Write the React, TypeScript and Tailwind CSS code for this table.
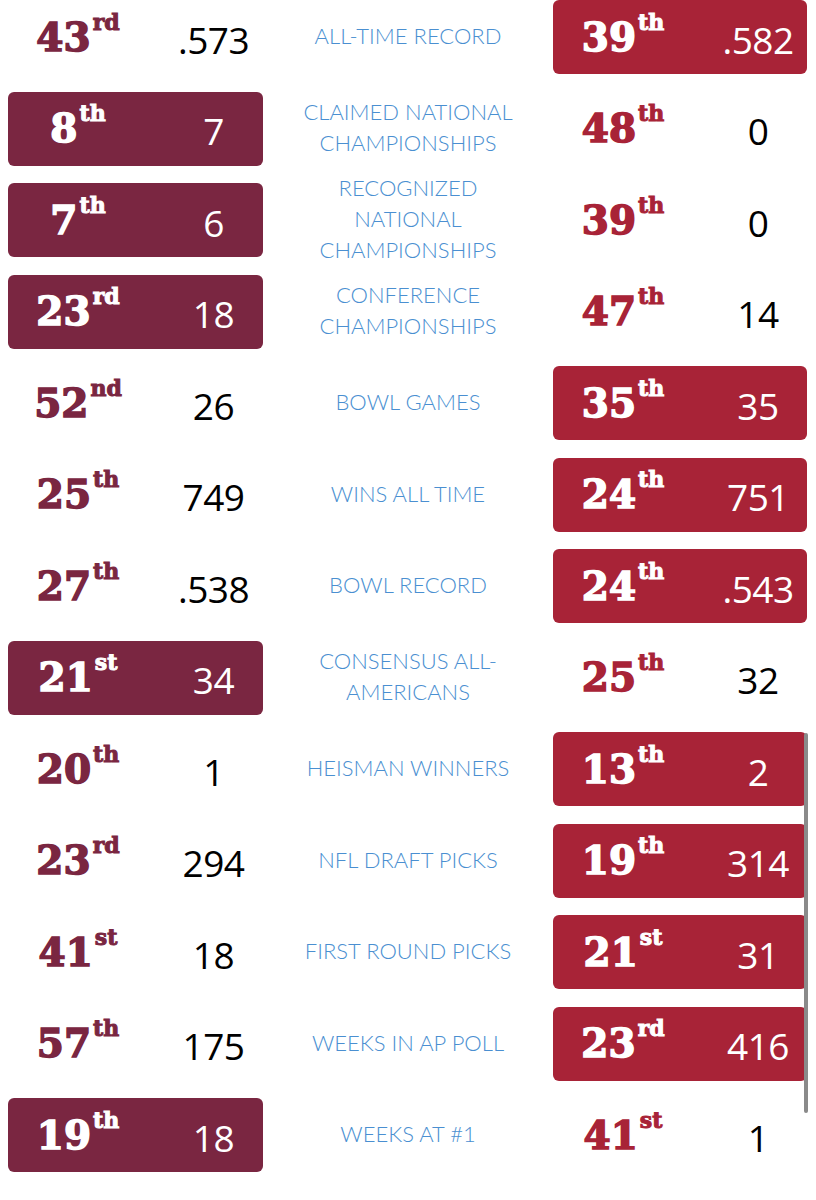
const rows: {
  l: [string, string, string];
  lBox: boolean;
  label: string[];
  r: [string, string, string];
  rBox: boolean;
}[] = [
  { l: ["43", "rd", ".573"], lBox: false, label: ["ALL-TIME RECORD"], r: ["39", "th", ".582"], rBox: true },
  { l: ["8", "th", "7"], lBox: true, label: ["CLAIMED NATIONAL", "CHAMPIONSHIPS"], r: ["48", "th", "0"], rBox: false },
  { l: ["7", "th", "6"], lBox: true, label: ["RECOGNIZED", "NATIONAL", "CHAMPIONSHIPS"], r: ["39", "th", "0"], rBox: false },
  { l: ["23", "rd", "18"], lBox: true, label: ["CONFERENCE", "CHAMPIONSHIPS"], r: ["47", "th", "14"], rBox: false },
  { l: ["52", "nd", "26"], lBox: false, label: ["BOWL GAMES"], r: ["35", "th", "35"], rBox: true },
  { l: ["25", "th", "749"], lBox: false, label: ["WINS ALL TIME"], r: ["24", "th", "751"], rBox: true },
  { l: ["27", "th", ".538"], lBox: false, label: ["BOWL RECORD"], r: ["24", "th", ".543"], rBox: true },
  { l: ["21", "st", "34"], lBox: true, label: ["CONSENSUS ALL-", "AMERICANS"], r: ["25", "th", "32"], rBox: false },
  { l: ["20", "th", "1"], lBox: false, label: ["HEISMAN WINNERS"], r: ["13", "th", "2"], rBox: true },
  { l: ["23", "rd", "294"], lBox: false, label: ["NFL DRAFT PICKS"], r: ["19", "th", "314"], rBox: true },
  { l: ["41", "st", "18"], lBox: false, label: ["FIRST ROUND PICKS"], r: ["21", "st", "31"], rBox: true },
  { l: ["57", "th", "175"], lBox: false, label: ["WEEKS IN AP POLL"], r: ["23", "rd", "416"], rBox: true },
  { l: ["19", "th", "18"], lBox: true, label: ["WEEKS AT #1"], r: ["41", "st", "1"], rBox: false },
];

function Cell({
  data,
  boxed,
  side,
}: {
  data: [string, string, string];
  boxed: boolean;
  side: "left" | "right";
}) {
  const boxBg = side === "left" ? "bg-[#7a2641]" : "bg-[#a82337]";
  const rankColor = boxed ? "text-white" : side === "left" ? "text-[#7a2641]" : "text-[#a82337]";
  const numColor = boxed ? "text-white" : "text-black";
  return (
    <div
      className={`grid grid-cols-[140px_1fr] items-center h-[74px] rounded-[6px] ${
        boxed ? boxBg : ""
      }`}
    >
      <div
        className={`text-center font-['DejaVu_Serif',serif] font-bold text-[39px] leading-none [-webkit-text-stroke:1.5px_currentColor] ${rankColor}`}
      >
        {data[0]}
        <sup className="text-[22px] align-[10px] ml-[2px] [-webkit-text-stroke:1px_currentColor]">{data[1]}</sup>
      </div>
      <div
        className={`pl-4 text-center font-['Open_Sans',sans-serif] text-[37px] leading-none mt-[4px] tracking-[-0.5px] ${numColor}`}
      >
        {data[2]}
      </div>
    </div>
  );
}

export default function App() {
  return (
    <div className="relative w-[816px] h-[1200px] bg-white overflow-hidden">
      <div className="flex flex-col gap-y-[17.5px] pl-[8px]">
        {rows.map((row, i) => (
          <div key={i} className="flex items-center h-[74px]">
            <div className="w-[255px] shrink-0">
              <Cell data={row.l} boxed={row.lBox} side="left" />
            </div>
            <div className="w-[290px] shrink-0 -mt-[3px] text-center font-['Lato',sans-serif] font-light text-[22px] leading-[31px] text-[#4a8fd1]">
              {row.label.map((line, j) => (
                <div key={j}>{line}</div>
              ))}
            </div>
            <div className="w-[254px] shrink-0">
              <Cell data={row.r} boxed={row.rBox} side="right" />
            </div>
          </div>
        ))}
      </div>
      {/* scrollbar */}
      <div className="absolute left-[804px] top-[733px] w-[4px] h-[380px] rounded-full bg-[#8a8a8a]" />
    </div>
  );
}
